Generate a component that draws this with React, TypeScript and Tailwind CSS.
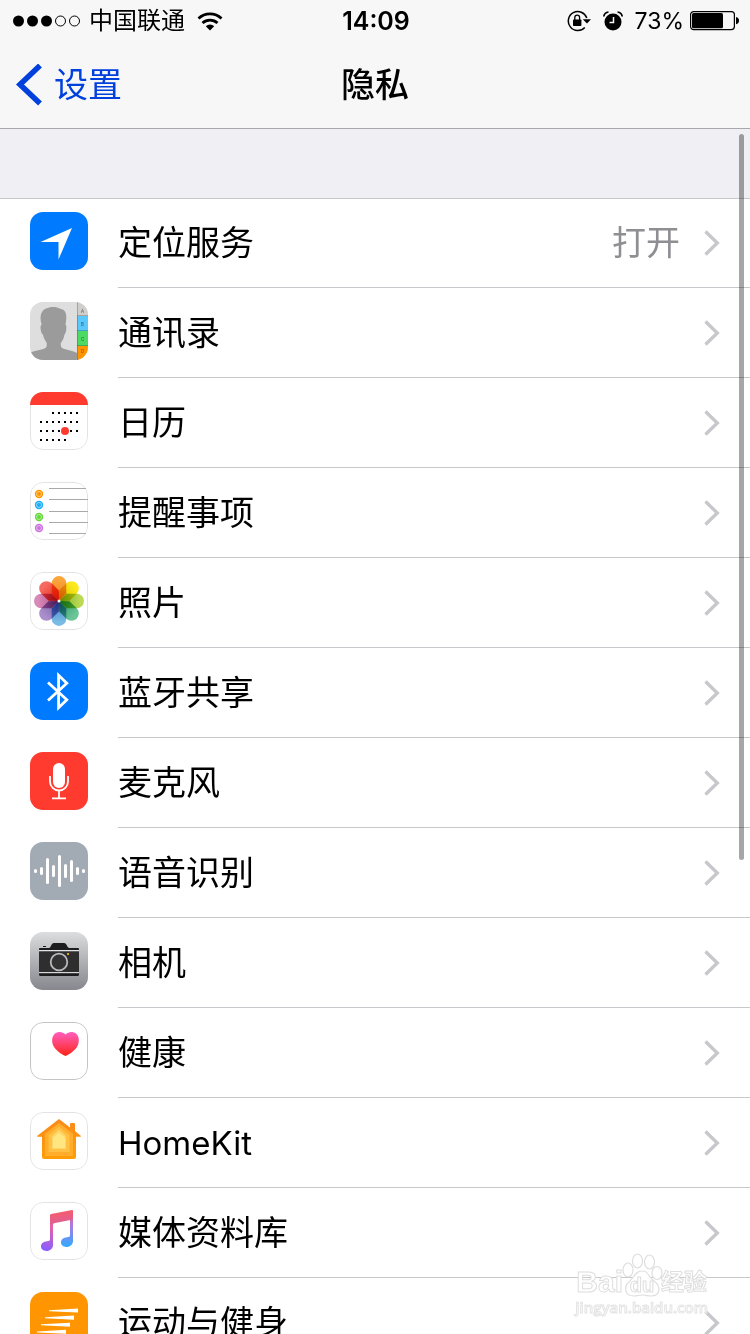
import type { ReactNode } from "react";

const TILE = "block size-[58px] shrink-0 overflow-hidden rounded-[13px]";

function Tile({ className, children }: { className: string; children: ReactNode }) {
  return (
    <svg viewBox="0 0 58 58" className={`${TILE} ${className}`} aria-hidden="true">
      {children}
    </svg>
  );
}

function Frame({ color = "#e3e3e5" }: { color?: string }) {
  return <rect x="0.5" y="0.5" width="57" height="57" rx="12.5" fill="none" stroke={color} />;
}

function LocationIcon() {
  return (
    <Tile className="bg-[#007aff]">
      <path d="M42 16 28.5 47.5V30H10.5Z" fill="#fff" />
    </Tile>
  );
}

function ContactsIcon() {
  const tabs = [
    { letter: "A", y: 0, h: 14, fill: "#cfceca", ty: 11 },
    { letter: "B", y: 14, h: 15, fill: "#5ac8fa", ty: 24 },
    { letter: "C", y: 29, h: 15, fill: "#4cd964", ty: 39 },
    { letter: "D", y: 44, h: 14, fill: "#ff9500", ty: 51 },
  ];
  return (
    <Tile className="bg-[#dedede]">
      <path
        d="M0 58V51C5 48 12 48 15.5 46 17 45 17 42 16.5 40.5 14.500 38 13.500 35 13 32.500 11.500 32 10.500 28 10.500 24.500 11 23 11.500 24 11.500 22 9 13 12 8 16 6.500 20 4.500 26 4 31 7 36 8 37.500 13 35.500 22.500 37 23 36.500 31 34.500 32.500 34 36 32.500 39 30.800 41 30.500 44 31 45.500 33 46.500 37 48 43 48.500 47 51V58Z"
        fill="#9b9b9b"
      />
      {tabs.map((t) => (
        <g key={t.letter}>
          <rect x="47" y={t.y} width="11" height={t.h} fill={t.fill} />
          <rect x="47" y={t.y + t.h - 1} width="11" height="1" fill="#000" opacity="0.2" />
          <text x="52.500" y={t.ty} fontSize="5" textAnchor="middle" fill="#000" opacity="0.5" fontFamily="Inter, sans-serif">
            {t.letter}
          </text>
        </g>
      ))}
      <rect x="47" width="1" height="58" fill="#000" opacity="0.2" />
    </Tile>
  );
}

function CalendarIcon() {
  const rows = [
    { y: 21, from: 2, to: 6 },
    { y: 30, from: 0, to: 6 },
    { y: 39, from: 0, to: 6 },
    { y: 48, from: 0, to: 4 },
  ];
  return (
    <Tile className="bg-white">
      <Frame />
      <rect width="58" height="13" fill="#ff3b30" />
      {rows.map((r) =>
        Array.from({ length: r.to - r.from + 1 }, (_, i) => (
          <rect key={`${r.y}-${i}`} x={10 + (r.from + i) * 6} y={r.y - 1} width="2" height="2" fill="#000" />
        )),
      )}
      <circle cx="35" cy="39" r="4" fill="#ff3b30" />
    </Tile>
  );
}

function RemindersIcon() {
  const items = [
    { y: 12, fill: "#ff9500" },
    { y: 23, fill: "#1badf8" },
    { y: 35, fill: "#63da38" },
    { y: 46, fill: "#cc73e1" },
  ];
  return (
    <Tile className="bg-white">
      <Frame />
      {items.map((d) => (
        <g key={d.y}>
          <circle cx="9" cy={d.y} r="4.200" fill={d.fill} />
          <circle cx="9" cy={d.y} r="2.500" fill={d.fill} stroke="#fff" strokeWidth="0.700" opacity="0.700" />
        </g>
      ))}
      <path d="M19 6.500H56M19 17.500H58M19 29.500H58M19 40.500H58M19 51.500H56" stroke="#a9a9ab" />
    </Tile>
  );
}

function PhotosIcon() {
  const petals = [
    { outer: "#faa63c", inner: "#f07a20" },
    { outer: "#fbe91c", inner: "#d8c400" },
    { outer: "#bcd955", inner: "#7fb42c" },
    { outer: "#6cc596", inner: "#2f9a6c" },
    { outer: "#79bce6", inner: "#4a80c4" },
    { outer: "#ab8fcc", inner: "#6f62a8" },
    { outer: "#d88bb9", inner: "#b0508c" },
    { outer: "#f76a60", inner: "#e82a1c" },
  ];
  return (
    <Tile className="bg-white">
      <defs>
        {petals.map((p, i) => (
          <linearGradient key={p.outer} id={`petal-${i}`} gradientUnits="userSpaceOnUse" x1="29" y1="8" x2="29" y2="27">
            <stop stopColor={p.outer} />
            <stop offset="1" stopColor={p.inner} />
          </linearGradient>
        ))}
      </defs>
      <Frame />
      <g className="isolate">
        {petals.map((p, i) => (
          <path
            key={p.outer}
            d="M29 29 21.700 21.500V11.300A7.300 7.300 0 0 1 36.300 11.300V21.500Z"
            fill={`url(#petal-${i})`}
            transform={`rotate(${i * 45} 29 29)`}
            className="mix-blend-multiply"
          />
        ))}
      </g>
      <circle cx="29" cy="29" r="1.500" fill="#fff" />
    </Tile>
  );
}

function BluetoothIcon() {
  return (
    <Tile className="bg-[#007aff]">
      <path d="M18 20.500 36.800 37.800 28.600 45.800V13.200L36.800 21.200 18 38.500" fill="none" stroke="#fff" strokeWidth="2.800" />
    </Tile>
  );
}

function MicrophoneIcon() {
  return (
    <Tile className="bg-[#ff3b30]">
      <rect x="23" y="11" width="12" height="25" rx="6" fill="#fff" />
      <path d="M20 24V29.500A9 9 0 0 0 38 29.500V24M29 38.500V46M22 46.300H36" fill="none" stroke="#fff" strokeWidth="1.800" />
    </Tile>
  );
}

function SpeechIcon() {
  const halves = [2, 4, 13, 6, 16, 7, 11, 4, 2];
  return (
    <Tile className="bg-[#a2aab4]">
      {halves.map((h, i) => (
        <rect key={i} x={4 + i * 6} y={29 - h} width="3" height={h * 2} rx="1.500" fill="#fff" />
      ))}
    </Tile>
  );
}

function CameraIcon() {
  return (
    <Tile className="bg-linear-to-b from-[#dcddde] to-[#86888e]">
      <path d="M9 18V17Q9 16 10 16H19C21 16 21 11 24 11H34C37 11 37 16 39.500 16H48Q49 16 49 17V18Z" fill="#1d1d1f" />
      <rect x="13" y="14" width="3" height="1" fill="#1d1d1f" />
      <rect x="9" y="18" width="40" height="1.300" fill="#e4e4e6" />
      <rect x="9" y="19.300" width="40" height="20.700" fill="#2e2e2f" />
      <rect x="9" y="40" width="40" height="1.300" fill="#d8d8da" />
      <path d="M9 41.300H49V42.500Q49 44 47.500 44H10.500Q9 44 9 42.500Z" fill="#1d1d1f" />
      <circle cx="29" cy="30" r="8.300" fill="#333334" stroke="#b9b9be" strokeWidth="1.800" />
      <rect x="37" y="21" width="2" height="2" fill="#e0a020" />
    </Tile>
  );
}

function HealthIcon() {
  return (
    <Tile className="bg-white">
      <defs>
        <linearGradient id="health" x2="0" y2="1">
          <stop stopColor="#ff5fc0" />
          <stop offset="1" stopColor="#ff2416" />
        </linearGradient>
      </defs>
      <Frame color="#c4c4c6" />
      <path d="M35.500 12.500C38 9.500 43 9.200 46 11.500 49.500 14.500 49.500 20 47.500 24 45 28.500 40 32 35.500 34 31 32 26 28.500 23.500 24 21.500 20 21.500 14.500 25 11.500 28 9.200 33 9.500 35.500 12.500Z" fill="url(#health)" />
    </Tile>
  );
}

function HomeIcon() {
  return (
    <Tile className="bg-white">
      <defs>
        <linearGradient id="home" x2="0" y2="1">
          <stop stopColor="#fa8a1c" />
          <stop offset="1" stopColor="#ff9d05" />
        </linearGradient>
      </defs>
      <Frame />
      <path d="M29 7 40 15.500V12Q40 11 41 11H44Q45 11 45 12V19L51 24Q51.500 24.800 50 24.800H46V45Q46 47 44 47H14Q12 47 12 45V24.800H8Q6.500 24.800 7 24Z" fill="url(#home)" />
      <path d="M29 11 43 21.800V44H15V21.800Z" fill="#ffad2b" />
      <path d="M29 14.500 39.500 23V40H18.500V23Z" fill="#ffc043" />
      <path d="M29 17.500 36 24V37H22V24Z" fill="#ffd566" />
      <path d="M29 20.500 35 26V36H23V26Z" fill="#ffe680" />
    </Tile>
  );
}

function MusicIcon() {
  return (
    <Tile className="bg-white">
      <defs>
        <linearGradient id="note-left" gradientUnits="userSpaceOnUse" x1="30" y1="12" x2="17" y2="48">
          <stop stopColor="#fb5c6e" />
          <stop offset="0.350" stopColor="#ee62a0" />
          <stop offset="1" stopColor="#8a5cff" />
        </linearGradient>
        <linearGradient id="note-right" gradientUnits="userSpaceOnUse" x1="40" y1="8" x2="38" y2="44">
          <stop stopColor="#f4586e" />
          <stop offset="0.400" stopColor="#b077dc" />
          <stop offset="1" stopColor="#38a8ff" />
        </linearGradient>
        <linearGradient id="beam" x2="0.200" y2="1">
          <stop stopColor="#fc5a62" />
          <stop offset="1" stopColor="#dd6096" />
        </linearGradient>
      </defs>
      <Frame />
      <path d="M20 14H23V43C23 46.500 20 49 16.500 49S11 47 11 44.300C11 41.500 13.500 39.500 17 39.300 19 39.200 20 38.500 20 37Z" fill="url(#note-left)" />
      <path d="M40 10H43V39C43 42.500 40 45 36.500 45S31 43 31 40.300C31 37.500 33.500 35.500 37 35.300 39 35.200 40 34.500 40 33Z" fill="url(#note-right)" />
      <path d="M20 22.500V13.500Q20 12.300 21.200 12L42 8Q43 7.800 43 9V17.500L24 21.300Q23 21.500 23 22.500Z" fill="url(#beam)" />
    </Tile>
  );
}

function MotionIcon() {
  return (
    <Tile className="bg-[#ff9500]">
      <path
        d="M19 18.200 48 16.500V20.500L19 19.200ZM15 25.200 44 23.500V27.800L15 26.200ZM11 32.300 40 30.700V34.800L11 33.300ZM7 39.400 36 37.700V41.800L7 40.400ZM11 46.500 40 44.800V48.800L11 47.500Z"
        fill="#fff"
      />
    </Tile>
  );
}

function Chevron() {
  return (
    <svg viewBox="0 0 16 26" className="h-[26px] w-4 shrink-0" aria-hidden="true">
      <path d="M1.500 1.500 13.300 13 1.500 24.500" fill="none" stroke="#c7c7cc" strokeWidth="3.400" />
    </svg>
  );
}

const ROWS: { id: string; label: string; value?: string; latin?: boolean; icon: ReactNode }[] = [
  { id: "location", label: "定位服务", value: "打开", icon: <LocationIcon /> },
  { id: "contacts", label: "通讯录", icon: <ContactsIcon /> },
  { id: "calendar", label: "日历", icon: <CalendarIcon /> },
  { id: "reminders", label: "提醒事项", icon: <RemindersIcon /> },
  { id: "photos", label: "照片", icon: <PhotosIcon /> },
  { id: "bluetooth", label: "蓝牙共享", icon: <BluetoothIcon /> },
  { id: "microphone", label: "麦克风", icon: <MicrophoneIcon /> },
  { id: "speech", label: "语音识别", icon: <SpeechIcon /> },
  { id: "camera", label: "相机", icon: <CameraIcon /> },
  { id: "health", label: "健康", icon: <HealthIcon /> },
  { id: "homekit", label: "HomeKit", latin: true, icon: <HomeIcon /> },
  { id: "media", label: "媒体资料库", icon: <MusicIcon /> },
  { id: "motion", label: "运动与健身", icon: <MotionIcon /> },
];

function StatusBar() {
  return (
    <div className="grid h-[42px] grid-cols-[1fr_auto_1fr] items-center pr-[11px] pl-[13px] text-[24px] leading-[42px]">
      <div className="flex items-center">
        <svg viewBox="0 0 68 12" className="h-3 w-[68px]" aria-hidden="true">
          <circle cx="5.500" cy="6" r="5.500" />
          <circle cx="19.500" cy="6" r="5.500" />
          <circle cx="33.500" cy="6" r="5.500" />
          <circle cx="47.500" cy="6" r="5" fill="none" stroke="#000" />
          <circle cx="61.500" cy="6" r="5" fill="none" stroke="#000" />
        </svg>
        <span className="ml-2">中国联通</span>
        <svg viewBox="0 0 26 19" className="ml-3 h-[19px] w-[26px]" aria-hidden="true">
          <g fill="none" stroke="#000" strokeWidth="2.800">
            <path d="M1.500 6.600A16.500 16.500 0 0 1 24.500 6.600" />
            <path d="M5.500 11A11 11 0 0 1 20.500 11" />
          </g>
          <path d="M13 18.500 8.800 14.200A6 6 0 0 1 17.200 14.200Z" />
        </svg>
      </div>
      <div className="text-[25px] font-semibold">14:09</div>
      <div className="flex items-center justify-end">
        <svg viewBox="0 0 24 22" className="h-[22px] w-6" aria-hidden="true">
          <path d="M19.800 8A9.500 9.500 0 1 0 17.800 17.500" fill="none" stroke="#000" strokeWidth="1.500" />
          <path d="M15.800 9.300H24L20 13.600Z" />
          <rect x="6" y="9.500" width="8.400" height="6.500" rx="0.800" />
          <path d="M7.800 10V7.500A2.400 2.400 0 0 1 12.600 7.500V10" fill="none" stroke="#000" strokeWidth="1.300" />
        </svg>
        <svg viewBox="0 0 20 20" className="ml-3 size-5" aria-hidden="true">
          <circle cx="10" cy="11" r="8.500" />
          <path d="M0.800 5.500C1.200 2.700 2.800 1.300 5.500 1M19.200 5.500C18.800 2.700 17.200 1.300 14.500 1" fill="none" stroke="#000" strokeWidth="1.700" />
          <path d="M10.500 6V11.500H6.500" fill="none" stroke="#f7f7f7" strokeWidth="1.500" />
        </svg>
        <span className="ml-3 text-[23px]">73%</span>
        <svg viewBox="0 0 49 20" className="ml-[6px] h-5 w-[49px]" aria-hidden="true">
          <rect x="0.600" y="0.600" width="43.800" height="18" rx="3" fill="none" stroke="#000" strokeWidth="1.200" />
          <rect x="2" y="2" width="31" height="15.200" rx="1.500" />
          <path d="M46 6Q49 6.500 49 9.600T46 13.200Z" />
        </svg>
      </div>
    </div>
  );
}

function Watermark() {
  return (
    <div
      aria-hidden="true"
      className="pointer-events-none absolute right-[42px] bottom-[17px] flex flex-col items-center font-bold text-white select-none [-webkit-text-stroke:1px_#dedede]"
    >
      <div className="flex h-[44px] items-end">
        <span className="font-['Liberation_Sans'] text-[30px] leading-[30px]">Bai</span>
        <span className="relative flex h-[44px] w-[38px] items-end justify-center">
          <svg viewBox="0 0 38 44" className="absolute inset-0 size-full overflow-visible" fill="#fff" stroke="#dedede" strokeWidth="1.200">
            <ellipse cx="5" cy="17" rx="5" ry="7" />
            <ellipse cx="14.500" cy="8" rx="5" ry="7" />
            <ellipse cx="26.500" cy="9" rx="5" ry="7" />
            <ellipse cx="34" cy="20" rx="5" ry="6.500" />
            <path d="M19 18C12 18 11 25 6 29S1 43 11 43C16 43 14 42 19 42S24 43 28 43C38 43 38 33 31 28S26 18 19 18Z" />
          </svg>
          <span className="relative font-['Liberation_Sans'] text-[20px] leading-6">du</span>
        </span>
        <span className="text-[23px] leading-[30px]">经验</span>
      </div>
      <span className="font-['Open_Sans'] text-[15px] leading-5 font-semibold [-webkit-text-stroke:1px_#e4e4e4]">jingyan.baidu.com</span>
    </div>
  );
}

export default function App() {
  return (
    <div className="relative flex h-screen flex-col overflow-hidden bg-white font-[Inter,'Noto_Sans_CJK_SC',sans-serif] text-black">
      <header className="shrink-0 border-b border-[#a7a7ac] bg-[#f7f7f7]">
        <StatusBar />
        <nav className="grid h-[86px] grid-cols-[1fr_auto_1fr] items-center px-4 text-[34px] leading-[86px]">
          <a href="#settings" className="flex items-center gap-3 text-[#0040dd]">
            <svg viewBox="0 0 26 42" className="h-[42px] w-[26px]" aria-hidden="true">
              <path d="M24 1.500 4 20.500 24 39.500" fill="none" stroke="currentColor" strokeWidth="5.500" />
            </svg>
            设置
          </a>
          <h1 className="font-medium">隐私</h1>
        </nav>
      </header>
      <main className="relative min-h-0 flex-1 overflow-hidden">
        <div className="h-[70px] border-b border-[#c8c7cc] bg-[#efeff4]" />
        <ul className="-mt-px">
          {ROWS.map((row) => (
            <li key={row.id}>
              <a href={`#${row.id}`} className="flex gap-[30px] pl-[30px]">
                <span className="pt-[14px] pb-[18px]">{row.icon}</span>
                <span className="flex flex-1 items-center border-b border-[#c8c7cc] pr-[30px] text-[34px] leading-[88px]">
                  <span className={row.latin ? "flex-1 text-[33px]" : "flex-1"}>{row.label}</span>
                  {row.value && <span className="mr-6 text-[#8e8e93]">{row.value}</span>}
                  <Chevron />
                </span>
              </a>
            </li>
          ))}
        </ul>
        <div className="absolute top-[5px] right-[6px] h-[726px] w-[5px] rounded-full bg-black/35" />
      </main>
      <Watermark />
    </div>
  );
}
